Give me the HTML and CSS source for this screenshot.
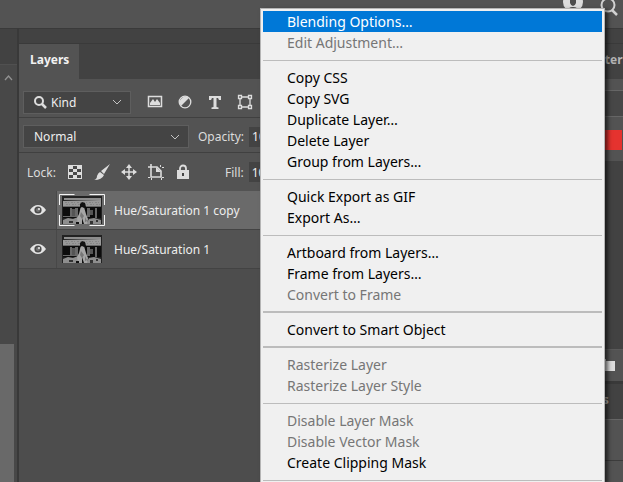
FILE: index.html
```html
<!DOCTYPE html>
<html lang="en">
<head>
  <meta charset="UTF-8">
  <title>Layers</title>
  <meta name="viewport" content="width=device-width, initial-scale=1.0">
  <link rel="stylesheet" href="styles.css">
</head>
<body>

  <!-- shared drawings -->
  <svg class="defs" aria-hidden="true">
    <symbol id="eye" viewBox="0 0 16 10">
      <path d="M0 5Q3.500 0 8 0T16 5Q12.500 10 8 10T0 5Z" fill="#e4e4e4"/>
      <circle cx="8" cy="5" r="3.600" fill="#4a4a4a"/>
      <circle cx="8" cy="5" r="2" fill="#777"/>
      <circle cx="9" cy="4" r="1" fill="#eee"/>
    </symbol>
    <symbol id="thumb" viewBox="0 0 40 28">
      <path fill="#222" d="M0 0h40v28H0z"/>
      <path fill="#8d8d8d" d="M2 2h37v2H2z"/>
      <path fill="#999" d="M1 5l38-1v6H1z"/>
      <path stroke="#858585" stroke-dasharray="2 1 1 2" d="M3 6.500h34M4 8.500h34"/>
      <path fill="#0c0c0c" d="M1 10h38v12H1z"/>
      <path fill="#686868" d="M1 10h38v1H1zM8 12h2v9H8zM13 12h3v9h-3zM25 12h3v9h-3zM33 12h2v10h-2zM1 20h14v1H1z"/>
      <path fill="#555" d="M10 13h3v7h-3zM28 14h3v5h-3z"/>
      <path fill="#8e8e8e" d="M1 24l5-2 5 1 5-2 3 7H1zM24 28l3-5 5-1 7 2v4z"/>
      <path fill="#333" d="M7 25h4v2H7zM28 25h3v3h-3zM34 24h2v2h-2z"/>
      <path fill="#a5a5a5" d="M19 10l3 1 2 7 2 5-1 5h-9l-1-6 2-4z"/>
      <path fill="#111" d="M18 8l2-2 3 1 1 4-2 1-2-1-2 1zM20 22l2 6h-2zM14 26h3v2h-3z"/>
      <path fill="#777" d="M19 16l3 4-2 3-2-3zM23 21l2 4-2 1z"/>
    </symbol>
    <symbol id="chevron" viewBox="0 0 10 6">
      <path d="M1 1l4 4 4-4" fill="none" stroke="#c4c4c4"/>
    </symbol>
  </svg>

  <div class="app">
    <header class="topbar">
      <button class="icon" aria-label="Account">
        <svg width="20" height="12"><circle cx="10" cy="2" r="10" fill="#dcdcdc"/><path d="M7 0h6v3q-1 3-3 3T7 3zM3 12q2-5 7-5t7 5z" fill="#4c4c4c"/></svg>
      </button>
      <button class="icon" aria-label="Search">
        <svg width="20" height="17"><circle cx="9" cy="5" r="6.500" fill="none" stroke="#d2d2d2" stroke-width="2"/><path d="M13 10l5 5" stroke="#d2d2d2" stroke-width="2.500"/></svg>
      </button>
    </header>

    <div class="workspace">
      <aside class="rail">
        <div class="rail-head"></div>
        <div class="track">
          <svg class="up" width="9" height="6"><path d="M1 5l3.500-4L8 5" fill="none" stroke="#929292" stroke-width="1.300"/></svg>
          <div class="thumb-bar"></div>
        </div>
      </aside>

      <main class="panel">
        <div class="grip"></div>
        <div class="tabs"><h2 class="tab">Layers</h2></div>

        <div class="tools">
          <div class="picker kind">
            <svg class="glass" width="13" height="13"><circle cx="5" cy="5" r="4" fill="none" stroke="#ddd" stroke-width="2"/><path d="M8 8l4 4" stroke="#ddd" stroke-width="2.500"/></svg>
            <select aria-label="Filter type"><option>Kind</option></select>
            <svg class="arrow" width="10" height="6"><use href="#chevron"/></svg>
          </div>
          <div class="filters">
            <button class="icon" aria-label="Pixel layers">
              <svg width="16" height="16"><path d="M1.500 2.500h13v10h-13z" fill="none" stroke="#ddd" stroke-width="1.500"/><path d="M3 11v-2l3-4 2 3 2-3 3 4v2z" fill="#ddd"/></svg>
            </button>
            <button class="icon" aria-label="Adjustment layers">
              <svg width="16" height="16"><circle cx="8" cy="8" r="5.800" fill="#555" stroke="#ddd" stroke-width="1.300"/><path d="M12 4A5.700 5.700 0 0 0 4 12z" fill="#ddd"/></svg>
            </button>
            <button class="icon" aria-label="Type layers">
              <svg width="16" height="16"><path d="M2 2h12v4h-2l-1-2H9.500v9l2 .5V15h-7v-1.500l2-.5V4H5L4 6H2z" fill="#ddd"/></svg>
            </button>
            <button class="icon" aria-label="Shape layers">
              <svg width="16" height="16" fill="none" stroke="#ddd" stroke-width="1.300"><path d="M4 3h8M3 4v8M13 4v8M4 13h8"/><path d="M1.500 1.500h3v3h-3zM11.500 1.500h3v3h-3zM1.500 11.500h3v3h-3zM11.500 11.500h3v3h-3z" fill="#535353"/></svg>
            </button>
          </div>
        </div>

        <div class="tools mode">
          <div class="picker blend">
            <select aria-label="Blend mode"><option>Normal</option></select>
            <svg class="arrow" width="10" height="6"><use href="#chevron"/></svg>
          </div>
          <label class="value opacity">Opacity: <input type="text" value="100%"></label>
        </div>

        <div class="tools lock">
          <span class="lock-label">Lock:</span>
          <div class="locks">
            <button class="icon" aria-label="Lock transparent pixels">
              <svg width="16" height="16"><path d="M1 1h14v14H1z" fill="#ddd"/><path d="M6 2h4v3H6zM2 5h4v3H2zM10 5h4v3h-4zM6 8h4v3H6zM2 11h4v3H2zM10 11h4v3h-4z" fill="#484848"/></svg>
            </button>
            <button class="icon" aria-label="Lock image pixels">
              <svg width="16" height="16"><path d="M16 0L7 7l3 3zM6 8l4 3q-2 5-10 5 3-1 3-4 1-3 3-4z" fill="#ddd"/></svg>
            </button>
            <button class="icon" aria-label="Lock position">
              <svg width="16" height="16"><path d="M8 2v12M2 8h12" stroke="#ddd" stroke-width="1.500"/><path d="M8 0l3 4H5zM8 16l3-4H5zM0 8l4-3v6zM16 8l-4-3v6z" fill="#ddd"/></svg>
            </button>
            <button class="icon" aria-label="Lock artboard nesting">
              <svg width="16" height="16"><path d="M3 0v3M0 3h3M3 3h6l4 4v6H3z" fill="none" stroke="#ddd" stroke-width="1.600"/><path d="M8 3v5h5zM12 1h1v2h-1zM14 3h2v1h-2zM0 13h2v1H0zM14 13h2v1h-2zM3 14h1v2H3zM13 14h1v2h-1z" fill="#ddd"/></svg>
            </button>
            <button class="icon" aria-label="Lock all">
              <svg width="16" height="16"><path d="M5 8V4.500a3 3 0 0 1 6 0V8" fill="none" stroke="#ddd" stroke-width="1.800"/><path d="M2 6h12v9H2z" fill="#ddd"/><path d="M7 9h2v3H7z" fill="#444"/></svg>
            </button>
          </div>
          <label class="value fill">Fill: <input type="text" value="100%"></label>
        </div>

        <ul class="layers">
          <li class="layer selected">
            <button class="eye" aria-label="Hide layer"><svg width="16" height="10"><use href="#eye"/></svg></button>
            <div class="layer-body">
              <span class="frame">
                <svg width="40" height="28"><use href="#thumb"/></svg>
                <svg class="corners" width="46" height="32" fill="none" stroke="#f4f4f4"><path d="M.5 11V.5h15M30.500.5h15V11M45.500 21v10.500h-15M15.500 31.500h-15V21"/></svg>
              </span>
              <span>Hue/Saturation 1 copy</span>
            </div>
          </li>
          <li class="layer">
            <button class="eye" aria-label="Hide layer"><svg width="16" height="10"><use href="#eye"/></svg></button>
            <div class="layer-body">
              <span class="frame"><svg width="40" height="28"><use href="#thumb"/></svg></span>
              <span>Hue/Saturation 1</span>
            </div>
          </li>
        </ul>
      </main>

      <aside class="dock">
        <div class="grip"></div>
        <div class="dock-tabs">Patterns</div>
        <div class="dock-bar"></div>
        <div class="dock-search"></div>
        <div class="dock-swatch"><div class="swatch"></div></div>
        <div class="dock-list"></div>
        <div class="dock-foot"><svg width="16" height="12"><path d="M0 0h6v2h9v10H0z" fill="#dedede"/></svg></div>
        <div class="dock-tabs low">Paths</div>
        <div class="dock-row"></div>
        <div class="dock-rest"></div>
      </aside>
    </div>

    <div class="menu" role="menu">
      <button role="menuitem" class="active">Blending Options…</button>
      <button role="menuitem" disabled>Edit Adjustment…</button>
      <hr>
      <button role="menuitem">Copy CSS</button>
      <button role="menuitem">Copy SVG</button>
      <button role="menuitem">Duplicate Layer…</button>
      <button role="menuitem">Delete Layer</button>
      <button role="menuitem">Group from Layers…</button>
      <hr>
      <button role="menuitem">Quick Export as GIF</button>
      <button role="menuitem">Export As…</button>
      <hr>
      <button role="menuitem">Artboard from Layers…</button>
      <button role="menuitem">Frame from Layers…</button>
      <button role="menuitem" disabled>Convert to Frame</button>
      <hr class="thick">
      <button role="menuitem">Convert to Smart Object</button>
      <hr class="thick">
      <button role="menuitem" disabled>Rasterize Layer</button>
      <button role="menuitem" disabled>Rasterize Layer Style</button>
      <hr>
      <button role="menuitem" disabled>Disable Layer Mask</button>
      <button role="menuitem" disabled>Disable Vector Mask</button>
      <button role="menuitem">Create Clipping Mask</button>
      <hr>
    </div>
  </div>

</body>
</html>
```
FILE: styles.css
```css
* {
  box-sizing: border-box;
}

body {
  margin: 0;
  background: #4d4d4d;
  color: #dcdcdc;
  font-family: "Noto Sans", "Open Sans", sans-serif;
  font-size: 12px;
}

button,
select,
input {
  font: inherit;
  color: inherit;
  border: none;
  padding: 0;
  background: none;
}

svg {
  display: block;
}

.defs {
  display: none;
}

.app {
  position: relative;
  display: flex;
  flex-direction: column;
  height: 100vh;
  overflow: hidden;
}

.topbar {
  display: flex;
  justify-content: flex-end;
  align-items: flex-start;
  gap: 16px;
  height: 28px;
  padding-right: 4px;
  background: #535353;
  flex: none;
}

.workspace {
  display: flex;
  flex: 1;
  min-height: 0;
}

/* left scroll rail */
.rail {
  display: flex;
  flex-direction: column;
  width: 19px;
  flex: none;
  background: #484848;
  border-right: 2px solid #393939;
}

.rail-head {
  height: 37px;
  background: #424242;
  border-top: 1px solid #3a3a3a;
  border-bottom: 1px solid #505050;
}

.track {
  display: flex;
  flex-direction: column;
  justify-content: space-between;
  flex: 1;
}

.up {
  margin: 10px 4px;
}

.thumb-bar {
  width: 14px;
  height: 33%;
  background: #696969;
}

/* layers panel */
.panel {
  flex: 1;
  min-width: 0;
  background: #4d4d4d;
}

.grip {
  height: 16px;
  background: #424242;
  border-top: 1px solid #3a3a3a;
  border-bottom: 1px solid #3a3a3a;
}

.tabs {
  display: flex;
  height: 35px;
  background: #424242;
}

.tab {
  margin: 0;
  padding: 0 10px 0 11px;
  background: #535353;
  color: #f2f2f2;
  font-size: 12px;
  line-height: 32px;
}

.tools {
  display: flex;
  align-items: center;
  height: 35px;
  padding-left: 4px;
  background: #535353;
  border-bottom: 1px solid #404040;
}

.tabs + .tools {
  height: 39px;
  padding-top: 8px;
}

.tools.mode {
  padding-top: 3px;
}

.tools.lock {
  height: 38px;
  padding-left: 8px;
  border-bottom: none;
}

.picker {
  display: flex;
  align-items: center;
  height: 23px;
  padding: 0 8px 0 10px;
  background: #444;
  border: 1px solid #5e5e5e;
}

.picker select {
  flex: 1;
  appearance: none;
  color: #eee;
}

.kind {
  width: 108px;
}

.blend {
  width: 166px;
}

.glass {
  margin-right: 4px;
}

.arrow {
  flex: none;
}

.icon {
  flex: none;
}

.filters {
  display: flex;
  gap: 14px;
  margin-left: 16px;
}

.locks {
  display: flex;
  gap: 11px;
  margin-left: 10px;
}

.lock-label {
  width: 30px;
}

.value {
  display: flex;
  align-items: center;
  gap: 5px;
}

.value input {
  width: 38px;
  height: 20px;
  padding-left: 3px;
  background: #434343;
  color: #eee;
}

.opacity {
  margin-left: 9px;
}

.fill {
  margin-left: 34px;
}

.layers {
  margin: 0;
  padding: 0;
  list-style: none;
}

.layer {
  display: flex;
  height: 39px;
  background: #535353;
  border-bottom: 1px solid #434343;
  color: #eee;
}

.eye {
  display: flex;
  align-items: center;
  justify-content: center;
  width: 38px;
  border-right: 1px solid #484848;
}

.layer-body {
  display: flex;
  align-items: center;
  flex: 1;
  gap: 12px;
  padding-left: 5px;
}

.selected .layer-body {
  background: #6a6a6a;
}

.frame {
  position: relative;
}

.corners {
  position: absolute;
  top: -2px;
  left: -3px;
}

/* right dock */
.dock {
  display: flex;
  flex-direction: column;
  width: 60px;
  flex: none;
  overflow: hidden;
  background: #424242;
}

.dock > div {
  flex: none;
}

.dock-tabs {
  height: 35px;
  padding-left: 22px;
  color: #b4b4b4;
  font-weight: bold;
  line-height: 32px;
}

.dock-bar {
  height: 12px;
  background: #535353;
  border-bottom: 1px solid #666;
}

.dock-search {
  height: 26px;
  background: #474747;
  border-bottom: 1px solid #666;
}

.dock-swatch {
  height: 44px;
  padding: 13px 1px 11px 0;
  background: #535353;
}

.swatch {
  height: 20px;
  background: #e5332f;
}

.dock-list {
  height: 188px;
}

.dock-foot {
  height: 32px;
  padding: 9px 0 0 37px;
  background: #535353;
  border-top: 1px solid #5a5a5a;
}

.dock-tabs.low {
  height: 38px;
  padding-left: 12px;
  border-top: 3px solid #393939;
}

.dock-row {
  height: 42px;
  background: #535353;
  border-top: 1px solid #666;
  border-bottom: 1px solid #3c3c3c;
}

.dock > .dock-rest {
  flex: 1;
  background: #535353;
}

/* context menu */
.menu {
  position: absolute;
  top: 8px;
  left: 260px;
  bottom: 0;
  width: 345px;
  padding: 2px;
  overflow: hidden;
  background: #f0f0f0;
  border: 1px solid #b5b5b5;
  border-bottom: none;
  box-shadow: 3px 2px 4px rgba(0, 0, 0, 0.6);
  color: #000;
  font-size: 14px;
}

.menu button {
  display: block;
  width: 100%;
  height: 21px;
  padding-left: 24px;
  line-height: 20px;
  text-align: left;
}

.menu .active {
  background: #0078d7;
  color: #fff;
}

.menu button:disabled {
  color: #767676;
}

.menu hr {
  height: 1px;
  margin: 7px 0 6px;
  border: none;
  background: #bcbcbc;
}

.menu .thick {
  height: 2px;
  margin: 6px 0;
}
```
